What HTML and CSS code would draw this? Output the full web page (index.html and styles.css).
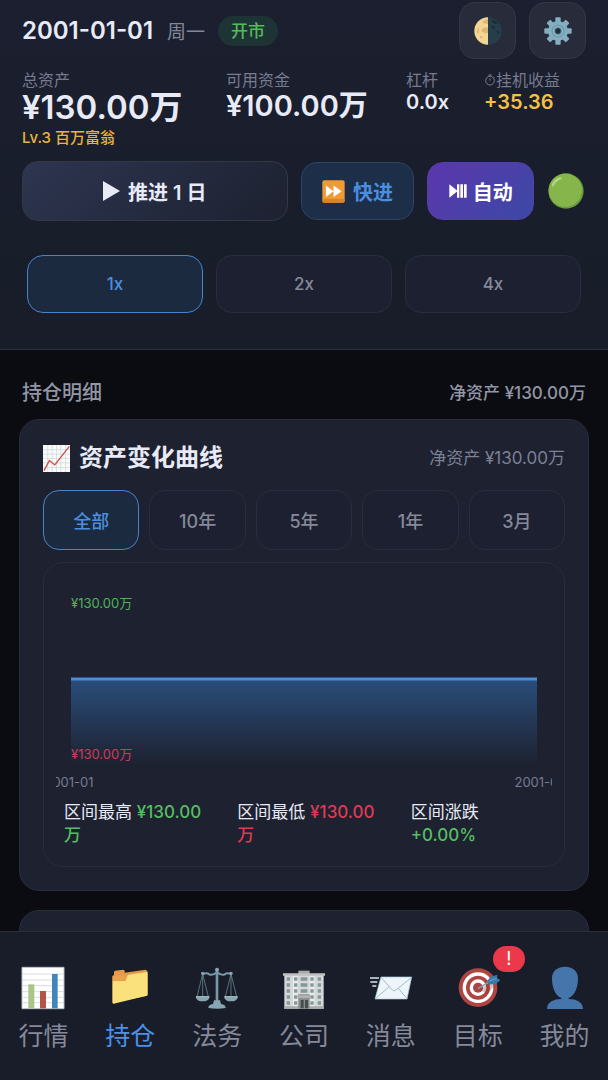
FILE: index.html
```html
<!DOCTYPE html>
<html lang="zh-CN">
<head>
<meta charset="utf-8">
<meta name="viewport" content="width=device-width, initial-scale=1">
<title>持仓明细</title>
<link rel="stylesheet" href="styles.css">
</head>
<body>
<header class="header">
  <div class="topbar">
    <span class="date">2001-01-01</span>
    <span class="weekday">周一</span>
    <span class="market">开市</span>
    <div class="tools">
      <button class="tool" type="button" aria-label="主题">
        <svg class="tool-icon" viewBox="0 0 84 84"><circle cx="42" cy="42" r="41" fill="#263e49"/><path d="M42 1a41 41 0 0 0 0 82z" fill="#f4d594"/><path d="M42 7c-8 0-15 5-17 11 5 3 8-1 12 2 2 2 4 1 5 0zM15 30c-5 5-8 14-5 21 4-2 7-7 5-12zM42 32c-8-4-17 0-20 7 0 6 6 5 8 8 3 3 8 1 12 0zM20 57c3 0 6 2 5 6s-6 0-7-2z" fill="#dfb678"/><path d="M54 9c7 0 14 4 17 9-4 3-10 4-13 0-3-2-6-5-4-9zM52 27c5-2 11 2 12 7-4 3-11 0-12-7zM67 42c6-2 11 2 9 9-5 1-8-4-9-9z" fill="#183039"/></svg>
      </button>
      <button class="tool" type="button" aria-label="设置">
        <svg class="tool-icon" viewBox="0 0 84 84"><g fill="#82aec0"><g id="teeth"><rect x="34" y="1" width="16" height="82" rx="3"/><rect x="1" y="34" width="82" height="16" rx="3"/></g><use href="#teeth" transform="rotate(45 42 42)"/><circle cx="42" cy="42" r="30"/></g><circle cx="42" cy="42" r="19" fill="#6795aa"/><circle cx="42" cy="42" r="16" fill="#8fb8c8"/><circle cx="42" cy="42" r="11" fill="#547f93"/><circle cx="42" cy="42" r="8" fill="#222a38"/></svg>
      </button>
    </div>
  </div>

  <div class="stats">
    <div class="stat">
      <span class="stat-label">总资产</span>
      <strong class="stat-value total">¥130.00万</strong>
      <span class="level">Lv.3 百万富翁</span>
    </div>
    <div class="stat">
      <span class="stat-label">可用资金</span>
      <strong class="stat-value cash">¥100.00万</strong>
    </div>
    <div class="stat">
      <span class="stat-label">杠杆</span>
      <strong class="stat-value small">0.0x</strong>
    </div>
    <div class="stat">
      <span class="stat-label"><svg class="watch" viewBox="0 0 36 36"><g fill="none" stroke="currentColor" stroke-width="3"><circle cx="18" cy="20" r="13"/><path d="M13 3h10M18 3v5M28 8l3 3M18 20v-7"/></g></svg>挂机收益</span>
      <strong class="stat-value small gold">+35.36</strong>
    </div>
  </div>

  <div class="actions">
    <button class="action advance" type="button"><svg class="play" viewBox="0 0 17 20"><path d="M0 0l17 10L0 20z" fill="currentColor"/></svg>推进 1 日</button>
    <button class="action forward" type="button"><svg class="ff" viewBox="0 0 70 70"><rect x="1" y="1" width="68" height="68" rx="6" fill="#f09a35"/><path d="M1 63v-5h68v5q0 6-6 6H7q-6 0-6-6z" fill="#d98429"/><path d="M12 17l23 17-23 18zM35 17l25 17-25 18z" fill="#fff"/></svg>快进</button>
    <button class="action auto" type="button"><svg class="pp" viewBox="0 0 54 42"><path d="M1 1l25 20L1 41zM24 1h7v40h-7zM34 1h8v40h-8zM45 1h8v40h-8z" fill="currentColor"/></svg>自动</button>
    <svg class="status" viewBox="0 0 106 106" role="img" aria-label="运行中"><circle cx="53" cy="53" r="52" fill="#68983d"/><circle cx="51" cy="51" r="49" fill="#86b64b"/><path d="M11 38q2-16 19-24 8-3 12 0-1 4-10 7-10 5-16 18-4 3-5-1z" fill="#b4d58a"/></svg>
  </div>

  <div class="speeds">
    <button class="pill speed active" type="button">1x</button>
    <button class="pill speed" type="button">2x</button>
    <button class="pill speed" type="button">4x</button>
  </div>
</header>

<main class="content">
  <div class="section-head">
    <h1 class="section-title">持仓明细</h1>
    <span class="section-net">净资产 ¥130.00万</span>
  </div>

  <section class="card">
    <div class="card-head">
      <svg class="trend" viewBox="0 0 80 80"><path fill="#fafafa" d="M0 0h80v80H0z"/><path d="M14 0v80M27 0v80M40 0v80M53 0v80M67 0v80M0 14h80M0 27h80M0 40h80M0 53h80M0 67h80" stroke="#c8d5d8" stroke-width="2"/><path d="M3 76l16-30 16 13L78 4" fill="none" stroke="#cb4f46" stroke-width="4"/></svg>
      <h2 class="card-title">资产变化曲线</h2>
      <span class="card-net">净资产 ¥130.00万</span>
    </div>
    <div class="ranges">
      <button class="pill range active" type="button">全部</button>
      <button class="pill range" type="button">10年</button>
      <button class="pill range" type="button">5年</button>
      <button class="pill range" type="button">1年</button>
      <button class="pill range" type="button">3月</button>
    </div>
    <div class="chart-box">
      <svg class="chart" viewBox="0 0 496 218">
        <defs><linearGradient id="area" x1="0" y1="0" x2="0" y2="1"><stop offset="0" stop-color="#3a8be0" stop-opacity=".42"/><stop offset="1" stop-color="#3a8be0" stop-opacity="0"/></linearGradient></defs>
        <rect x="15" y="103" width="466" height="86" fill="url(#area)"/>
        <path d="M15 103h466" stroke="#4b8cdb" stroke-width="3"/>
        <text class="high" x="15" y="32">¥130.00万</text>
        <text class="low" x="15" y="183">¥130.00万</text>
        <text class="tick" x="13" y="211">2001-01</text>
        <text class="tick" x="483" y="211">2001-01</text>
      </svg>
      <div class="summary">
        <p class="figure">区间最高 <b class="up">¥130.00万</b></p>
        <p class="figure">区间最低 <b class="down">¥130.00万</b></p>
        <p class="figure">区间涨跌<br><b class="up">+0.00%</b></p>
      </div>
    </div>
  </section>
  <section class="card next-card"></section>
</main>

<nav class="nav">
  <a class="nav-item" href="#market">
    <svg class="nav-icon" viewBox="0 0 132 132"><path d="M3 4h126v124H3z" fill="#fff" stroke="#b9c0c8" stroke-width="3"/><path d="M4 24h124M4 42h124M4 59h124M4 77h124M4 94h124M4 110h124" stroke="#c5cad0" stroke-width="2"/><path d="M22 55h18v72H22z" fill="#a9c58a"/><path d="M57 75h18v52H57z" fill="#b0554a"/><path d="M93 24h17v103H93z" fill="#4285b8"/></svg>
    <span>行情</span>
  </a>
  <a class="nav-item current" href="#positions" aria-current="page">
    <svg class="nav-icon" viewBox="0 0 132 132"><path d="M13 31l5-5V17l3-3 26-3 3 3v6l63-9 5 4v74L13 110z" fill="#e79b48"/><path d="M14 44l38 1 7-18 56-9q4-1 4 3v64q0 3-3 4L17 113q-3 1-3-2z" fill="#fae17b"/><path d="M14 31l35-4-1 15-34 4z" fill="#eba14e"/></svg>
    <span>持仓</span>
  </a>
  <a class="nav-item" href="#legal">
    <svg class="nav-icon" viewBox="0 0 132 132"><g fill="none" stroke="#7898a4"><path d="M66 10v103" stroke-width="8"/><path d="M23 25q12-6 20 0 8 5 23-6 15 11 23 6 8-6 20 0" stroke-width="6"/><path d="M23 24L6 92M23 24l17 68M23 24v68M108 24L91 92M108 24l17 68M108 24v68" stroke-width="2"/></g><g fill="#86a6b2"><circle cx="66" cy="11" r="6"/><circle cx="23" cy="22" r="5"/><circle cx="108" cy="22" r="5"/><path d="M2 92h42q-3 14-21 14T2 92zM87 92h42q-3 14-21 14T87 92zM57 103h18l3 11q14 2 14 12-26 4-52 0 0-10 14-12z"/></g><path d="M3 92h40M88 92h40" stroke="#b0c6ce" stroke-width="3"/></svg>
    <span>法务</span>
  </a>
  <a class="nav-item" href="#company">
    <svg class="nav-icon" viewBox="0 0 132 132"><path d="M49 14h34v12H49z" fill="#aaa"/><path d="M7 25h118v103H7z" fill="#d5d7d8"/><path d="M33 29h14v98H33zM83 29h14v98H83z" fill="#ececec"/><path d="M3 22h126v7H3z" fill="#bfc1c2"/><path d="M7 121h118v8H7z" fill="#aaa"/><path d="M14 39h10M36 39h10M85 39h10M107 39h10M14 57h10M36 57h10M85 57h10M107 57h10M14 75h10M36 75h10M85 75h10M107 75h10M14 93h10M36 93h10M85 93h10M107 93h10M14 111h10M36 111h10M85 111h10M107 111h10M56 39h20M56 57h20M56 75h20" stroke="#84989a" stroke-width="11"/><path d="M49 85h34v43H49z" fill="#8c8c8c"/><path d="M51 88h30v8H51z" fill="#b2b3b3"/><path d="M56 102h9v25h-9zM69 102h9v25h-9z" fill="#444d50"/></svg>
    <span>公司</span>
  </a>
  <a class="nav-item" href="#messages">
    <svg class="nav-icon" viewBox="0 0 132 132"><path d="M36 33h92l-14 66H18z" fill="#edf5fa" stroke="#a8c9dc" stroke-width="2"/><path d="M36 34l34 38q5 5 11 0l47-38M19 98l42-36M114 98L88 67" fill="none" stroke="#9dbdd0" stroke-width="3"/><path d="M3 36h27M4 48h21M10 60h12" stroke="#dbe4ea" stroke-width="4"/></svg>
    <span>消息</span>
  </a>
  <a class="nav-item" href="#goals">
    <span class="icon-wrap">
      <svg class="nav-icon" viewBox="0 0 132 132"><circle cx="66" cy="65" r="58" fill="#ad4540"/><circle cx="66" cy="65" r="46" fill="#fff"/><circle cx="66" cy="65" r="36" fill="#ad4540"/><circle cx="66" cy="65" r="25" fill="#fff"/><circle cx="66" cy="65" r="15" fill="#ad4540"/><path d="M70 72l33-23 11 12-19 22z" fill="#7c3434" opacity=".3"/><path d="M66 68l36-22" stroke="#7da3b1" stroke-width="4"/><path d="M94 44l10-12 20-6-1 11 10 5-12 11-22 3z" fill="#377aab"/><path d="M100 45l22-8" stroke="#66a6ca" stroke-width="3"/></svg>
      <span class="badge">!</span>
    </span>
    <span>目标</span>
  </a>
  <a class="nav-item" href="#me">
    <svg class="nav-icon" viewBox="0 0 132 132"><path d="M66 2c25 0 39 15 39 34 0 30-10 53-28 60v3c24 0 43 10 43 30H12c0-20 19-30 43-30v-3C37 89 27 66 27 36 27 17 41 2 66 2z" fill="#4675ab"/></svg>
    <span>我的</span>
  </a>
</nav>
</body>
</html>
```
FILE: styles.css
```css
* { box-sizing: border-box; }

body {
  margin: 0;
  height: 100vh;
  display: flex;
  flex-direction: column;
  background: #0b0c11;
  color: #e8eaf6;
  font-family: Inter, "Noto Sans CJK SC", sans-serif;
  font-size: 17px;
}

h1, h2, p { margin: 0; }
svg { display: block; flex: none; }
button { font-family: inherit; cursor: pointer; margin: 0; padding: 0; }

.header {
  flex: none;
  padding: 2px 22px 36px;
  background: linear-gradient(#1b1f2f, #181d29);
  border-bottom: 1px solid #2a2e38;
}

.topbar { display: flex; align-items: center; }
.date { font-size: 24px; font-weight: 600; }
.weekday { margin-left: 14px; font-size: 19px; color: #83879a; }
.market {
  margin-left: 13px;
  padding: 0 13px;
  border-radius: 15px;
  background: #1e3434;
  color: #51bd59;
  font-size: 17px;
  font-weight: 500;
  line-height: 30px;
}
.tools { display: flex; gap: 13px; margin-left: auto; }
.tool {
  width: 57px;
  height: 57px;
  display: grid;
  place-items: center;
  border: 1px solid #343846;
  border-radius: 16px;
  background: #272b3a;
}
.tool-icon { width: 28px; height: 28px; }

.stats {
  display: grid;
  grid-template-columns: 204fr 180fr 78fr 102fr;
  margin-top: 11px;
}
.stat { display: flex; flex-direction: column; white-space: nowrap; }
.stat-label {
  display: flex;
  align-items: center;
  font-size: 16px;
  line-height: 20px;
  color: #777b8e;
}
.watch { width: 12px; height: 12px; }
.stat-value { font-weight: 600; }
.total { font-size: 33px; line-height: 34px; }
.cash { font-size: 29px; line-height: 32px; }
.small { font-size: 20px; line-height: 24px; }
.gold { color: #f5c044; }
.level { font-size: 15px; font-weight: 500; line-height: 28px; color: #e9b43a; }

.actions { display: flex; align-items: center; gap: 13px; margin-top: 9px; }
.action {
  height: 58px;
  display: flex;
  align-items: center;
  justify-content: center;
  gap: 8px;
  border: 1px solid #343846;
  border-radius: 16px;
  color: #e8eaf6;
  font-size: 20px;
  font-weight: 600;
}
.advance { flex: 267; height: 60px; background: linear-gradient(135deg, #2d3550, #1d2130); }
.forward { flex: 113; background: #1d2e49; border-color: #2b4563; color: #4a8edf; }
.auto { flex: 106; gap: 6px; background: linear-gradient(135deg, #5c36ad, #3c49a5); border-color: #5141a8; color: #fff; }
.play { width: 17px; height: 20px; }
.ff { width: 23px; height: 23px; }
.pp { width: 18px; height: 14px; }
.status { width: 36px; height: 36px; margin: 0 2px 0 1px; }

.speeds { display: flex; gap: 13px; margin: 34px 5px 0; }
.pill {
  flex: 1;
  border: 1px solid #2a2e3b;
  border-radius: 16px;
  background: #1c2030;
  color: #858999;
  font-weight: 500;
}
.pill.active { border-color: #4784cc; background: #1b2a3f; color: #4a8edf; }
.speed { height: 58px; font-size: 17px; }
.range { height: 60px; font-size: 18px; }

.content {
  flex: 1;
  min-height: 0;
  overflow-y: auto;
  scrollbar-width: none;
  padding: 28px 19px 0;
}
.section-head {
  display: flex;
  align-items: center;
  justify-content: space-between;
  padding: 0 3px;
  color: #9296a5;
  line-height: 30px;
}
.section-title { font-size: 20px; font-weight: 500; }
.section-net { font-size: 17px; font-weight: 500; }

.card {
  margin-top: 11px;
  padding: 22px 23px 23px;
  border: 1px solid #2a2e3b;
  border-radius: 20px;
  background: #1d2130;
}
.card-head { display: flex; align-items: center; line-height: 32px; }
.trend { width: 27px; height: 27px; }
.card-title { margin-left: 9px; font-size: 24px; font-weight: 600; }
.card-net { margin-left: auto; color: #7c8093; }
.ranges { display: flex; gap: 10px; margin-top: 16px; }

.chart-box {
  margin-top: 12px;
  padding: 13px 12px 19px;
  border: 1px solid #2a2e3b;
  border-radius: 20px;
}
.chart { width: 100%; height: auto; overflow: hidden; font-size: 13px; }
.high { fill: #4db45a; }
.low { fill: #ce3c56; }
.tick { fill: #777b8e; text-anchor: middle; }
.summary {
  display: grid;
  grid-template-columns: repeat(3, 1fr);
  gap: 32px;
  margin-top: 7px;
  padding-left: 8px;
  line-height: 23px;
}
.figure b { font-weight: 500; }
.up { color: #56bd60; }
.down { color: #dc3c52; }
.next-card { margin-top: 19px; min-height: 240px; }

.nav {
  flex: none;
  display: flex;
  padding: 34px 0 25px;
  border-top: 1px solid #2a2e38;
  background: #181d29;
}
.nav-item {
  flex: 1;
  display: flex;
  flex-direction: column;
  align-items: center;
  gap: 8px;
  color: #85899a;
  font-size: 25px;
  line-height: 37px;
  text-decoration: none;
}
.nav-item.current { color: #4a90e8; }
.nav-icon { width: 44px; height: 44px; }
.icon-wrap { position: relative; }
.badge {
  position: absolute;
  top: -20px;
  right: -25px;
  width: 32px;
  border-radius: 13px;
  background: #eb384a;
  color: #fff;
  font-size: 18px;
  line-height: 26px;
  text-align: center;
}
```
